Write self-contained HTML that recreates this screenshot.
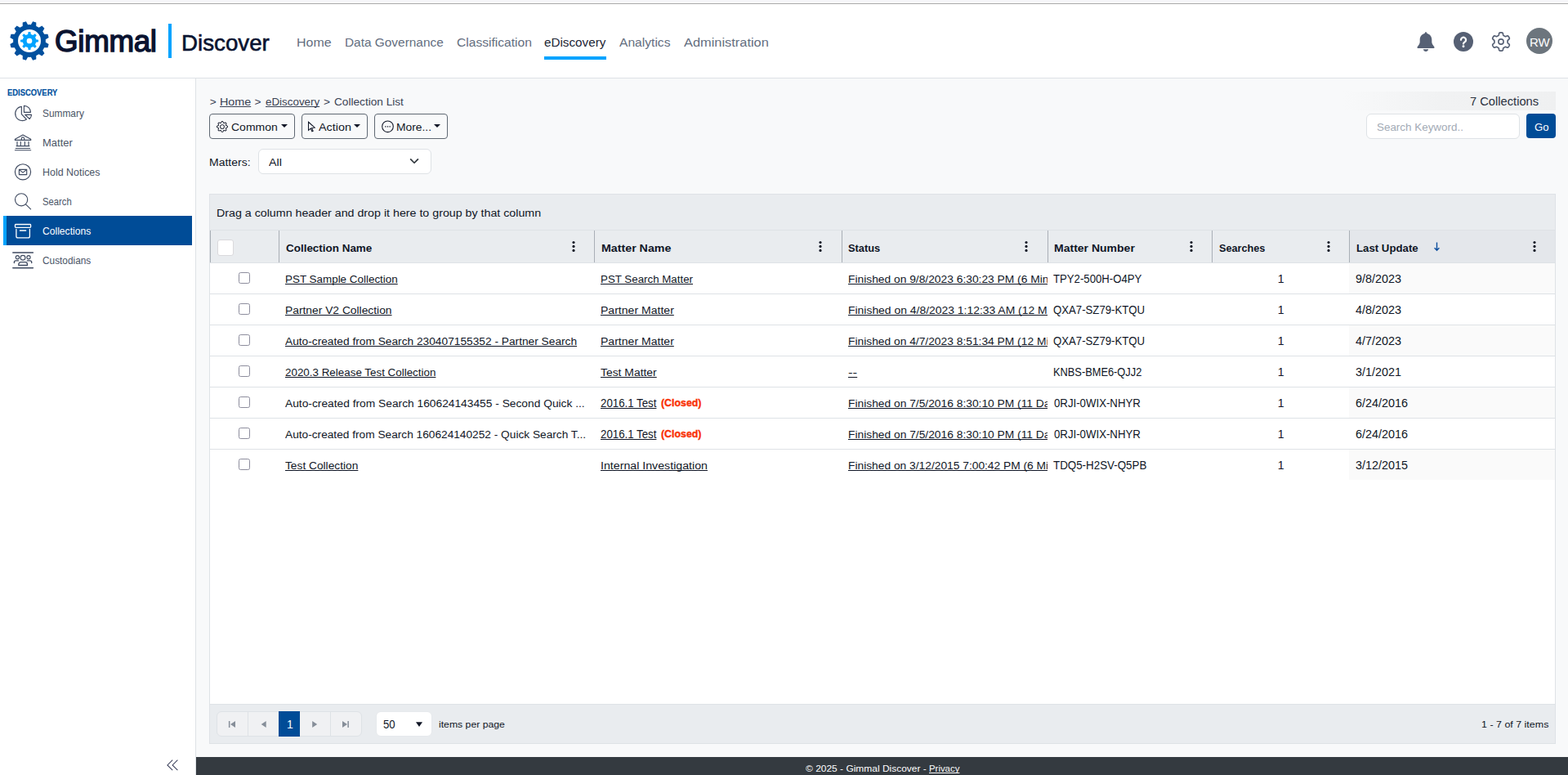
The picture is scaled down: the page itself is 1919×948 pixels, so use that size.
<!DOCTYPE html>
<html lang="en">
<head>
<meta charset="utf-8">
<title>Collection List - Gimmal Discover</title>
<style>
*{box-sizing:border-box}
html,body{margin:0;padding:0}
body{width:1919px;height:948px;overflow:hidden;position:relative;background:#f8f9fa;font-family:"Liberation Sans",Arial,sans-serif;font-size:14px;color:#101626}
header,aside,main,footer,nav,section{position:absolute;display:block}
div,span,a,svg,ul,li,button,label,h1,h2,p,input,i,b{position:absolute;margin:0;padding:0}
ul{list-style:none}
.t{white-space:pre;line-height:1;color:inherit;text-decoration:none}
a.t.u,.u{text-decoration:underline;text-decoration-thickness:1px;text-underline-offset:0.5px;text-decoration-skip-ink:none}
button{border:0;background:none;font:inherit;color:inherit}
#topbar{left:0;top:0;width:1919px;height:5px;background:linear-gradient(#f6f6f9 0,#f6f6f9 3px,#fafafc 3px,#fafafc 4px);border-bottom:1px solid #a9a9a9}
header{left:0;top:5px;width:1919px;height:91px;background:#fff;border-bottom:1px solid #dee2e6}
aside{left:0;top:96px;width:240px;height:852px;background:#fff;border-right:1px solid #dee2e6}
main{left:240px;top:96px;width:1679px;height:830px;background:#f8f9fa}
footer{left:240px;top:926px;width:1679px;height:22px;background:#343a40;color:#fff}
.nav{color:#646e80}
.nav .on{color:#1d2535}
.side{color:#4a5466}
.btn{border:1px solid #5f6873;border-radius:4px;background:transparent}
.caret{width:0;height:0;border-left:4.2px solid transparent;border-right:4.2px solid transparent;border-top:4.2px solid #101626}
.grid{background:#fff;border:1px solid #dee2e6}
.cb{border:1px solid #8d8d9d;border-radius:2.5px;background:#fff}
</style>
</head>
<body>
<div id="topbar"></div>
<header>
<a class="brandlink" aria-label="Gimmal Discover" style="left:0;top:0"><svg class="ic logo" style="left:12px;top:21px;" width="48" height="48" viewBox="0 0 48 48" aria-hidden="true"><path fill="#00509e" fill-rule="evenodd" d="M25.87 4.19L28.09 0.35L32.29 1.48L32.28 5.91A19.9 19.9 0 0 1 35.53 7.78L39.36 5.56L42.44 8.64L40.22 12.47A19.9 19.9 0 0 1 42.09 15.72L46.52 15.71L47.65 19.91L43.81 22.13A19.9 19.9 0 0 1 43.81 25.87L47.65 28.09L46.52 32.29L42.09 32.28A19.9 19.9 0 0 1 40.22 35.53L42.44 39.36L39.36 42.44L35.53 40.22A19.9 19.9 0 0 1 32.28 42.09L32.29 46.52L28.09 47.65L25.87 43.81A19.9 19.9 0 0 1 22.13 43.81L19.91 47.65L15.71 46.52L15.72 42.09A19.9 19.9 0 0 1 12.47 40.22L8.64 42.44L5.56 39.36L7.78 35.53A19.9 19.9 0 0 1 5.91 32.28L1.48 32.29L0.35 28.09L4.19 25.87A19.9 19.9 0 0 1 4.19 22.13L0.35 19.91L1.48 15.71L5.91 15.72A19.9 19.9 0 0 1 7.78 12.47L5.56 8.64L8.64 5.56L12.47 7.78A19.9 19.9 0 0 1 15.72 5.91L15.71 1.48L19.91 0.35L22.13 4.19A19.9 19.9 0 0 1 25.87 4.19ZM24 10a14 14 0 1 0 0 28a14 14 0 1 0 0-28Z"/><path fill="#00a3ff" fill-rule="evenodd" d="M22.13 15.91L22.65 12.98L25.35 12.98L25.87 15.91A8.3 8.3 0 0 1 28.40 16.96L30.83 15.25L32.75 17.17L31.04 19.60A8.3 8.3 0 0 1 32.09 22.13L35.02 22.65L35.02 25.35L32.09 25.87A8.3 8.3 0 0 1 31.04 28.40L32.75 30.83L30.83 32.75L28.40 31.04A8.3 8.3 0 0 1 25.87 32.09L25.35 35.02L22.65 35.02L22.13 32.09A8.3 8.3 0 0 1 19.60 31.04L17.17 32.75L15.25 30.83L16.96 28.40A8.3 8.3 0 0 1 15.91 25.87L12.98 25.35L12.98 22.65L15.91 22.13A8.3 8.3 0 0 1 16.96 19.60L15.25 17.17L17.17 15.25L19.60 16.96A8.3 8.3 0 0 1 22.13 15.91ZM24 20.65a3.35 3.35 0 1 0 0 6.7a3.35 3.35 0 1 0 0-6.7Z"/></svg><span class="t brand" style="left:66.60px;top:27.20px;font-size:37px;letter-spacing:-0.300px;transform:scaleX(0.9927);transform-origin:0 50%;-webkit-text-stroke:1.5px currentColor;color:#0a1330;">Gimmal</span><div style="left:206px;top:24px;width:4px;height:42px;background:#00a3ff;"></div><span class="t brand2" style="left:222.00px;top:33.00px;font-size:28.5px;transform:scaleX(0.9723);transform-origin:0 50%;-webkit-text-stroke:0.6px currentColor;color:#0a1330;">Discover</span></a>
<nav class="nav" aria-label="Main" style="left:0;top:0">
<a class="t" style="left:362.73px;top:39.00px;font-size:15.5px;transform:scaleX(1.0307);transform-origin:0 50%;">Home</a><a class="t" style="left:421.63px;top:39.00px;font-size:15.5px;transform:scaleX(0.9938);transform-origin:0 50%;">Data Governance</a><a class="t" style="left:558.66px;top:39.00px;font-size:15.5px;transform:scaleX(1.0065);transform-origin:0 50%;">Classification</a><a class="t on" style="left:666.27px;top:39.00px;font-size:15.5px;transform:scaleX(0.9834);transform-origin:0 50%;">eDiscovery</a><a class="t" style="left:758.38px;top:39.00px;font-size:15.5px;transform:scaleX(1.0071);transform-origin:0 50%;">Analytics</a><a class="t" style="left:837.11px;top:39.00px;font-size:15.5px;transform:scaleX(1.0575);transform-origin:0 50%;">Administration</a><div style="left:666px;top:64px;width:76px;height:4px;background:#00a3ff;"></div></nav>
<div class="tools" style="left:0;top:0"><svg class="ic" style="left:1733px;top:34px;" width="24" height="24" viewBox="0 0 24 24" aria-hidden="true"><path fill="#566074" d="M12 .2c.75 0 1.350.6 1.350 1.350v.45c3.4.65 5.950 3.600 5.950 7.200v3.100c0 1.250.4 2.450 1.150 3.450l1.850 2.400c.6.800.050 1.950-.95 1.950H2.650c-1 0-1.550-1.150-.95-1.950l1.850-2.400c.750-1 1.150-2.200 1.150-3.450V9.200c0-3.600 2.550-6.550 5.950-7.200v-.45c0-.750.6-1.350 1.350-1.350zM8.800 21.200h6.400c-.3 1.600-1.600 2.800-3.200 2.800s-2.900-1.200-3.200-2.800z"/></svg><svg class="ic" style="left:1779px;top:34px;" width="24" height="24" viewBox="0 0 24 24" aria-hidden="true"><circle cx="12" cy="12" r="12" fill="#566074"/><path d="M9 9.800A3.050 3.050 0 1 1 13.600 12.400C12.600 13.050 12 13.500 12 14.500" fill="none" stroke="#fff" stroke-width="2.250" stroke-linecap="round"/><circle cx="12" cy="17.700" r="1.450" fill="#fff"/></svg><svg class="ic" style="left:1825px;top:34px;" width="24" height="24" viewBox="0 0 24 24" aria-hidden="true"><path d="M12.00 0.80L12.39 0.81L12.78 0.84L13.17 0.90L13.55 1.00L13.90 1.20L14.21 1.59L14.43 2.26L14.55 3.10L14.68 3.77L14.85 4.17L15.07 4.40L15.31 4.57L15.56 4.71L15.80 4.85L16.05 4.99L16.29 5.13L16.54 5.27L16.78 5.42L17.05 5.54L17.36 5.61L17.79 5.57L18.43 5.34L19.22 5.03L19.91 4.88L20.40 4.95L20.75 5.16L21.03 5.44L21.27 5.74L21.50 6.07L21.70 6.40L21.89 6.74L22.05 7.10L22.20 7.46L22.30 7.84L22.30 8.25L22.12 8.71L21.65 9.23L20.99 9.76L20.47 10.20L20.21 10.55L20.12 10.86L20.09 11.15L20.09 11.43L20.10 11.72L20.10 12.00L20.10 12.28L20.09 12.57L20.09 12.85L20.12 13.14L20.21 13.45L20.47 13.80L20.99 14.24L21.65 14.77L22.12 15.29L22.30 15.75L22.30 16.16L22.20 16.54L22.05 16.90L21.89 17.26L21.70 17.60L21.50 17.93L21.27 18.26L21.03 18.56L20.75 18.84L20.40 19.05L19.91 19.12L19.22 18.97L18.43 18.66L17.79 18.43L17.36 18.39L17.05 18.46L16.78 18.58L16.54 18.73L16.29 18.87L16.05 19.01L15.80 19.15L15.56 19.29L15.31 19.43L15.07 19.60L14.85 19.83L14.68 20.23L14.55 20.90L14.43 21.74L14.21 22.41L13.90 22.80L13.55 23.00L13.17 23.10L12.78 23.16L12.39 23.19L12.00 23.20L11.61 23.19L11.22 23.16L10.83 23.10L10.45 23.00L10.10 22.80L9.79 22.41L9.57 21.74L9.45 20.90L9.32 20.23L9.15 19.83L8.93 19.60L8.69 19.43L8.44 19.29L8.20 19.15L7.95 19.01L7.71 18.87L7.46 18.73L7.22 18.58L6.95 18.46L6.64 18.39L6.21 18.43L5.57 18.66L4.78 18.97L4.09 19.12L3.60 19.05L3.25 18.84L2.97 18.56L2.73 18.26L2.50 17.93L2.30 17.60L2.11 17.26L1.95 16.90L1.80 16.54L1.70 16.16L1.70 15.75L1.88 15.29L2.35 14.77L3.01 14.24L3.53 13.80L3.79 13.45L3.88 13.14L3.91 12.85L3.91 12.57L3.90 12.28L3.90 12.00L3.90 11.72L3.91 11.43L3.91 11.15L3.88 10.86L3.79 10.55L3.53 10.20L3.01 9.76L2.35 9.23L1.88 8.71L1.70 8.25L1.70 7.84L1.80 7.46L1.95 7.10L2.11 6.74L2.30 6.40L2.50 6.07L2.73 5.74L2.97 5.44L3.25 5.16L3.60 4.95L4.09 4.88L4.78 5.03L5.57 5.34L6.21 5.57L6.64 5.61L6.95 5.54L7.22 5.42L7.46 5.27L7.71 5.13L7.95 4.99L8.20 4.85L8.44 4.71L8.69 4.57L8.93 4.40L9.15 4.17L9.32 3.77L9.45 3.10L9.57 2.26L9.79 1.59L10.10 1.20L10.45 1.00L10.83 0.90L11.22 0.84L11.61 0.81Z" fill="none" stroke="#566074" stroke-width="1.700" stroke-linejoin="round"/><circle cx="12" cy="12" r="3.100" fill="none" stroke="#566074" stroke-width="1.600"/></svg><div style="left:1868px;top:29px;width:32px;height:32px;border-radius:50%;background:#6c757d;"></div><span class="t" style="left:1871.52px;top:39.00px;font-size:15.5px;transform:scaleX(0.9679);transform-origin:0 50%;color:#fff;">RW</span></div>
</header>
<aside>
<h2 class="t" style="left:8.56px;top:12.00px;font-size:11.5px;transform:scaleX(0.8185);transform-origin:0 50%;-webkit-text-stroke:0.18px currentColor;color:#00509e;">EDISCOVERY</h2><ul class="side" style="left:0;top:0">
<li style="left:4px;top:24px;width:231px;height:36px;"><svg class="ic" style="left:8px;top:2px;" width="34" height="34" viewBox="12 122 34 34" aria-hidden="true"><g fill="none" stroke="#3f4a60" stroke-width="1.15" stroke-linejoin="round" stroke-linecap="round"><path d="M26.35 130.4V139.6L32.4 146A8.65 8.65 0 1 1 26.35 130.4Z"/><path d="M29.4 129.3A8.1 8.1 0 0 1 37.5 137.3H29.4Z"/><path d="M30.7 140.3H38.6A8.5 8.5 0 0 1 36.2 145.5Z"/></g></svg><a class="t" style="left:47.83px;top:12.00px;font-size:13px;transform:scaleX(0.9149);transform-origin:0 50%;">Summary</a></li>
<li style="left:4px;top:60px;width:231px;height:36px;"><svg class="ic" style="left:8px;top:2px;" width="34" height="34" viewBox="12 158 34 34" aria-hidden="true"><g fill="none" stroke="#3f4a60" stroke-width="1.15" stroke-linejoin="round" stroke-linecap="round"><path d="M28 165.1L18.4 170.3V171.4H37.7V170.3Z"/><path d="M26.3 171.2V169.6A1.7 1.7 0 0 1 29.7 169.6V171.2"/><path d="M21 173.3V178.3M25.3 173.3V178.3M30.4 173.3V178.3M35 173.3V178.3M20.1 178.6H35.9M19.2 181.5H36.7M18.4 183.7H37.7"/></g></svg><a class="t" style="left:47.72px;top:12.00px;font-size:13px;transform:scaleX(0.9979);transform-origin:0 50%;">Matter</a></li>
<li style="left:4px;top:96px;width:231px;height:36px;"><svg class="ic" style="left:8px;top:2px;" width="34" height="34" viewBox="12 194 34 34" aria-hidden="true"><g fill="none" stroke="#3f4a60" stroke-width="1.15" stroke-linejoin="round" stroke-linecap="round"><circle cx="28" cy="210.3" r="9.6"/><path d="M23.4 207.3H32.7V213.6H23.4Z"/><path d="M23.6 207.6L28 211.1L32.5 207.6"/></g></svg><a class="t" style="left:47.77px;top:12.00px;font-size:13px;transform:scaleX(0.9565);transform-origin:0 50%;">Hold Notices</a></li>
<li style="left:4px;top:132px;width:231px;height:36px;"><svg class="ic" style="left:8px;top:2px;" width="34" height="34" viewBox="12 230 34 34" aria-hidden="true"><g fill="none" stroke="#3f4a60" stroke-width="1.15" stroke-linejoin="round" stroke-linecap="round"><circle cx="26.1" cy="244.3" r="7.6"/><path d="M31.7 250.2L37.6 255.8"/></g></svg><a class="t" style="left:47.89px;top:12.00px;font-size:13px;transform:scaleX(0.8676);transform-origin:0 50%;">Search</a></li>
<li class="on" style="left:4px;top:168px;width:231px;height:36px;background:#004c97;border-left:4px solid #00a3ff;color:#fff;" aria-current="page"><svg class="ic" style="left:4px;top:2px;" width="34" height="34" viewBox="12 266 34 34" aria-hidden="true"><g fill="none" stroke="#fff" stroke-width="1.3" stroke-linejoin="round" stroke-linecap="round"><rect x="18.5" y="274.5" width="19.1" height="3.9" rx="0.8"/><path d="M19.9 280.3V288.9A2 2 0 0 0 21.9 290.9H34.4A2 2 0 0 0 36.4 288.9V280.3"/><path d="M24.5 282H31.6" stroke-width="1.5"/></g></svg><a class="t" style="left:44.26px;top:12.00px;font-size:13px;transform:scaleX(0.9315);transform-origin:0 50%;">Collections</a></li>
<li style="left:4px;top:204px;width:231px;height:36px;"><svg class="ic" style="left:8px;top:2px;" width="34" height="34" viewBox="12 302 34 34" aria-hidden="true"><g fill="none" stroke="#3f4a60" stroke-width="1.15" stroke-linejoin="round" stroke-linecap="round"><path d="M15.8 309H40.4M15.8 327.8H40.4" stroke-width="1.5"/><circle cx="21.4" cy="314.7" r="2.1"/><circle cx="28" cy="315.3" r="2.9"/><circle cx="35" cy="314.7" r="2.1"/><path d="M17.4 321.6V320.9A2 2 0 0 1 19.4 318.9H22.6M33.4 318.9H36.7A2 2 0 0 1 38.7 320.9V321.6" stroke-width="1.4"/><path d="M25.6 320.6H30.7A2.8 2.8 0 0 1 33.5 323.4V324.5H22.8V323.4A2.8 2.8 0 0 1 25.6 320.6Z" stroke-width="1.3"/></g></svg><a class="t" style="left:48.27px;top:12.00px;font-size:13px;transform:scaleX(0.9116);transform-origin:0 50%;">Custodians</a></li>
</ul>
<svg class="ic" style="left:200px;top:830px;" width="22" height="20" viewBox="200 926 22 20" aria-hidden="true"><path fill="none" stroke="#3a3f5a" stroke-width="1.05" d="M211.2 929.7L204.9 935.9L211.2 942.1M217.4 929.7L211.1 935.9L217.4 942.1"/></svg></aside>
<main>
<nav class="bc" aria-label="breadcrumb" style="color:#3a4254"><span class="t" style="left:16.78px;top:22.20px;font-size:13.7px;">&gt;</span><a class="t u" style="left:28.82px;top:22.20px;font-size:13.7px;transform:scaleX(1.0464);transform-origin:0 50%;">Home</a><span class="t" style="left:71.48px;top:22.20px;font-size:13.7px;">&gt;</span><a class="t u" style="left:84.69px;top:22.20px;font-size:13.7px;transform:scaleX(0.9771);transform-origin:0 50%;">eDiscovery</a><span class="t" style="left:155.88px;top:22.20px;font-size:13.7px;">&gt;</span><span class="t" style="left:168.99px;top:22.20px;font-size:13.7px;transform:scaleX(0.9961);transform-origin:0 50%;">Collection List</span></nav>
<div style="left:1404px;top:16px;width:260px;height:23px;background:linear-gradient(90deg,rgba(239,240,241,0) 0%,#f1f2f3 45%,#eff0f1 100%);"></div><span class="t" style="left:1559.47px;top:20.20px;font-size:15.5px;transform:scaleX(0.9474);transform-origin:0 50%;color:#2b3140;">7 Collections</span><div class="toolbar" role="toolbar" style="left:0;top:0"><button class="btn" style="left:16px;top:43px;width:105px;height:31px;" type="button" aria-haspopup="true"><svg class="ic" style="left:8px;top:8px;" width="14" height="14" viewBox="0 0 16 16" aria-hidden="true"><g fill="#101626"><path d="M8 4.754a3.246 3.246 0 1 0 0 6.492 3.246 3.246 0 0 0 0-6.492zM5.754 8a2.246 2.246 0 1 1 4.492 0 2.246 2.246 0 0 1-4.492 0z"/><path d="M9.796 1.343c-.527-1.790-3.065-1.790-3.592 0l-.094.319a.873.873 0 0 1-1.255.520l-.292-.160c-1.640-.892-3.433.902-2.540 2.541l.159.292a.873.873 0 0 1-.520 1.255l-.319.094c-1.790.527-1.790 3.065 0 3.592l.319.094a.873.873 0 0 1 .520 1.255l-.160.292c-.892 1.640.901 3.434 2.541 2.540l.292-.159a.873.873 0 0 1 1.255.520l.094.319c.527 1.790 3.065 1.790 3.592 0l.094-.319a.873.873 0 0 1 1.255-.520l.292.160c1.640.893 3.434-.902 2.540-2.541l-.159-.292a.873.873 0 0 1 .520-1.255l.319-.094c1.790-.527 1.790-3.065 0-3.592l-.319-.094a.873.873 0 0 1-.520-1.255l.160-.292c.893-1.640-.902-3.433-2.541-2.540l-.292.159a.873.873 0 0 1-1.255-.520l-.094-.319zm-2.633.283c.246-.835 1.428-.835 1.674 0l.094.319a1.873 1.873 0 0 0 2.693 1.115l.291-.160c.764-.415 1.600.420 1.184 1.185l-.159.292a1.873 1.873 0 0 0 1.116 2.692l.318.094c.835.246.835 1.428 0 1.674l-.319.094a1.873 1.873 0 0 0-1.115 2.693l.160.291c.415.764-.420 1.600-1.185 1.184l-.291-.159a1.873 1.873 0 0 0-2.693 1.116l-.094.318c-.246.835-1.428.835-1.674 0l-.094-.319a1.873 1.873 0 0 0-2.692-1.115l-.292.160c-.764.415-1.600-.420-1.184-1.185l.159-.291A1.873 1.873 0 0 0 1.945 8.930l-.319-.094c-.835-.246-.835-1.428 0-1.674l.319-.094A1.873 1.873 0 0 0 3.060 4.377l-.160-.292c-.415-.764.420-1.600 1.185-1.184l.292.159a1.873 1.873 0 0 0 2.692-1.115l.094-.319z"/></g></svg><span class="t" style="left:26.17px;top:8.60px;font-size:13.7px;transform:scaleX(1.0219);transform-origin:0 50%;">Common</span><i class="caret" style="left:87px;top:12.2px;width:8.4px;height:4.2px;"></i></button><button class="btn" style="left:129px;top:43px;width:81px;height:31px;" type="button" aria-haspopup="true"><svg class="ic" style="left:5px;top:7px;" width="13" height="16" viewBox="375 147 13 16" aria-hidden="true"><path fill="none" stroke="#101626" stroke-width="1.05" stroke-linejoin="miter" d="M377.5 149.3V159.4L380.2 157.1L381.9 160.8L383.2 160.2L381.6 156.6L385.2 156.2Z"/></svg><span class="t" style="left:19.86px;top:8.60px;font-size:13.7px;transform:scaleX(1.0483);transform-origin:0 50%;">Action</span><i class="caret" style="left:63px;top:12.2px;width:8.4px;height:4.2px;"></i></button><button class="btn" style="left:218px;top:43px;width:90px;height:31px;" type="button" aria-haspopup="true"><svg class="ic" style="left:7px;top:7px;" width="17" height="16" viewBox="466 147 17 16" aria-hidden="true"><circle cx="474.5" cy="154.8" r="6.8" fill="none" stroke="#101626" stroke-width="1.05"/><path d="M471.2 154.2h1.3v1.2h-1.3zM473.85 154.2h1.3v1.2h-1.3zM476.5 154.2h1.3v1.2h-1.3z" fill="#101626"/></svg><span class="t" style="left:26.27px;top:8.60px;font-size:13.7px;transform:scaleX(1.0106);transform-origin:0 50%;">More...</span><i class="caret" style="left:72px;top:12.2px;width:8.4px;height:4.2px;"></i></button></div>
<label class="t" style="left:16.45px;top:96.00px;font-size:13.7px;transform:scaleX(1.0218);transform-origin:0 50%;">Matters:</label><div class="select" style="left:76px;top:86px;width:212px;height:31px;border:1px solid #dee2e6;border-radius:6px;background:#fff;" role="combobox" aria-label="Matters" aria-expanded="false"><span class="t" style="left:12.47px;top:9.00px;font-size:13.7px;transform:scaleX(1.0404);transform-origin:0 50%;">All</span><svg class="ic" style="left:183px;top:9px;" width="15" height="10" viewBox="500 192 15 10" aria-hidden="true"><path d="M502.7 194.9L507.05 199.25L511.4 194.9" fill="none" stroke="#343a40" stroke-width="1.75" stroke-linecap="round" stroke-linejoin="round"/></svg></div>
<div class="search" role="search" style="left:0;top:0"><div class="input" style="left:1432px;top:43px;width:188px;height:31px;border:1px solid #dee2e6;border-radius:6px;background:#fff;" role="searchbox" aria-label="Search Keyword"><span class="t" style="left:12.05px;top:8.80px;font-size:13.7px;transform:scaleX(0.9799);transform-origin:0 50%;color:#a3abb6;">Search Keyword..</span></div><button style="left:1628px;top:43px;width:36px;height:30px;background:#004c97;border-radius:4px;" type="button"><span class="t" style="left:9.61px;top:9.80px;font-size:13.7px;transform:scaleX(0.9618);transform-origin:0 50%;color:#fff;">Go</span></button></div>
<section class="grid" style="left:16px;top:141px;width:1648px;height:673px;" role="grid" aria-label="Collections">
<div class="grouping" style="left:0px;top:0px;width:1646px;height:44px;background:#e9ecef;border-bottom:1px solid #dee2e6;"><span class="t" style="left:7.73px;top:16.00px;font-size:13.7px;transform:scaleX(1.0397);transform-origin:0 50%;">Drag a column header and drop it here to group by that column</span></div>
<div class="hrow" style="left:0px;top:44px;width:1646px;height:40px;background:#e9ecef;border-bottom:1px solid #dee2e6;" role="row"><div class="th" style="left:0px;top:0px;width:84px;height:39px;border-left:1px solid #a9afb6;" role="columnheader"><i class="hcb" style="left:8px;top:11px;width:20px;height:20px;border:1px solid #dad9dc;border-radius:3px;background:#fff;" role="checkbox" aria-checked="false"></i></div><div class="th" style="left:84px;top:0px;width:386px;height:39px;border-left:1px solid #a9afb6;" role="columnheader"><span class="t" style="left:8.10px;top:15.00px;font-size:13.7px;font-weight:700;transform:scaleX(0.9818);transform-origin:0 50%;">Collection Name</span><svg class="ic" style="left:356.5px;top:12px;fill:#101626;" width="6" height="16" viewBox="0 0 6 16" aria-hidden="true"><circle cx="3" cy="2.5" r="1.6"/><circle cx="3" cy="7.45" r="1.6"/><circle cx="3" cy="12.4" r="1.6"/></svg></div><div class="th" style="left:470px;top:0px;width:303px;height:39px;border-left:1px solid #a9afb6;" role="columnheader"><span class="t" style="left:7.57px;top:15.00px;font-size:13.7px;font-weight:700;transform:scaleX(1.0388);transform-origin:0 50%;">Matter Name</span><svg class="ic" style="left:272.5px;top:12px;fill:#101626;" width="6" height="16" viewBox="0 0 6 16" aria-hidden="true"><circle cx="3" cy="2.5" r="1.6"/><circle cx="3" cy="7.45" r="1.6"/><circle cx="3" cy="12.4" r="1.6"/></svg></div><div class="th" style="left:773px;top:0px;width:252px;height:39px;border-left:1px solid #a9afb6;" role="columnheader"><span class="t" style="left:7.29px;top:15.00px;font-size:13.7px;font-weight:700;transform:scaleX(0.9368);transform-origin:0 50%;">Status</span><svg class="ic" style="left:221.5px;top:12px;fill:#101626;" width="6" height="16" viewBox="0 0 6 16" aria-hidden="true"><circle cx="3" cy="2.5" r="1.6"/><circle cx="3" cy="7.45" r="1.6"/><circle cx="3" cy="12.4" r="1.6"/></svg></div><div class="th" style="left:1025px;top:0px;width:201px;height:39px;border-left:1px solid #a9afb6;" role="columnheader"><span class="t" style="left:7.28px;top:15.00px;font-size:13.7px;font-weight:700;transform:scaleX(1.0235);transform-origin:0 50%;">Matter Number</span><svg class="ic" style="left:171.5px;top:12px;fill:#101626;" width="6" height="16" viewBox="0 0 6 16" aria-hidden="true"><circle cx="3" cy="2.5" r="1.6"/><circle cx="3" cy="7.45" r="1.6"/><circle cx="3" cy="12.4" r="1.6"/></svg></div><div class="th" style="left:1226px;top:0px;width:168px;height:39px;border-left:1px solid #a9afb6;" role="columnheader"><span class="t" style="left:7.90px;top:15.00px;font-size:13.7px;font-weight:700;transform:scaleX(0.9267);transform-origin:0 50%;">Searches</span><svg class="ic" style="left:138.5px;top:12px;fill:#101626;" width="6" height="16" viewBox="0 0 6 16" aria-hidden="true"><circle cx="3" cy="2.5" r="1.6"/><circle cx="3" cy="7.45" r="1.6"/><circle cx="3" cy="12.4" r="1.6"/></svg></div><div class="th" style="left:1394px;top:0px;width:252px;height:39px;border-left:1px solid #a9afb6;background:#e4e7eb;" role="columnheader" aria-sort="descending"><span class="t" style="left:7.95px;top:15.00px;font-size:13.7px;font-weight:700;transform:scaleX(0.9655);transform-origin:0 50%;">Last Update</span><svg class="ic" style="left:101px;top:12px;" width="12" height="15" viewBox="1753 294 12 15" aria-hidden="true"><path d="M1758.5 296.6V306.2M1755.6 303.3L1758.5 306.3L1761.4 303.3" fill="none" stroke="#0d4f9e" stroke-width="1.4"/></svg><svg class="ic" style="left:222.5px;top:12px;fill:#101626;" width="6" height="16" viewBox="0 0 6 16" aria-hidden="true"><circle cx="3" cy="2.5" r="1.6"/><circle cx="3" cy="7.45" r="1.6"/><circle cx="3" cy="12.4" r="1.6"/></svg></div></div>
<div class="tbody" role="rowgroup" style="left:0;top:0">
<div class="row" style="left:0px;top:84px;width:1646px;height:38px;border-bottom:1px solid #dee2e6;" role="row"><div class="td" style="left:0px;top:0px;width:84px;height:37px;" role="gridcell"><i class="cb" style="left:35px;top:11px;width:14px;height:14px;" role="checkbox" aria-checked="false"></i></div><div class="td" style="left:84px;top:0px;width:386px;height:37px;" role="gridcell"><a class="t u" style="left:7.70px;top:13.00px;font-size:13.7px;transform:scaleX(0.9804);transform-origin:0 50%;">PST Sample Collection</a></div><div class="td" style="left:470px;top:0px;width:303px;height:37px;" role="gridcell"><a class="t u" style="left:7.71px;top:13.00px;font-size:13.7px;transform:scaleX(0.9731);transform-origin:0 50%;">PST Search Matter</a></div><div class="td" style="left:774px;top:0px;width:251px;height:37px;overflow:hidden;" role="gridcell"><a class="t u" style="left:6.57px;top:13.00px;font-size:13.7px;transform:scaleX(1.0081);transform-origin:0 50%;">Finished on 9/8/2023 6:30:23 PM (6 Minutes)</a></div><div class="td" style="left:1025px;top:0px;width:201px;height:37px;" role="gridcell"><span class="t" style="left:7.26px;top:12.00px;font-size:14px;transform:scaleX(0.9407);transform-origin:0 50%;">TPY2-500H-O4PY</span></div><div class="td" style="left:1226px;top:0px;width:168px;height:37px;" role="gridcell"><span class="t" style="left:80.82px;top:12.00px;font-size:14px;">1</span></div><div class="td" style="left:1394px;top:0px;width:252px;height:37px;background:#fafafa;" role="gridcell"><span class="t" style="left:8.15px;top:12.00px;font-size:14px;transform:scaleX(1.0262);transform-origin:0 50%;">9/8/2023</span></div></div>
<div class="row" style="left:0px;top:122px;width:1646px;height:38px;border-bottom:1px solid #dee2e6;" role="row"><div class="td" style="left:0px;top:0px;width:84px;height:37px;" role="gridcell"><i class="cb" style="left:35px;top:11px;width:14px;height:14px;" role="checkbox" aria-checked="false"></i></div><div class="td" style="left:84px;top:0px;width:386px;height:37px;" role="gridcell"><a class="t u" style="left:7.67px;top:13.00px;font-size:13.7px;transform:scaleX(1.0093);transform-origin:0 50%;">Partner V2 Collection</a></div><div class="td" style="left:470px;top:0px;width:303px;height:37px;" role="gridcell"><a class="t u" style="left:7.65px;top:13.00px;font-size:13.7px;transform:scaleX(1.0267);transform-origin:0 50%;">Partner Matter</a></div><div class="td" style="left:774px;top:0px;width:251px;height:37px;overflow:hidden;" role="gridcell"><a class="t u" style="left:6.56px;top:13.00px;font-size:13.7px;transform:scaleX(1.0167);transform-origin:0 50%;">Finished on 4/8/2023 1:12:33 AM (12 Minutes)</a></div><div class="td" style="left:1025px;top:0px;width:201px;height:37px;" role="gridcell"><span class="t" style="left:7.45px;top:12.00px;font-size:14px;transform:scaleX(0.9414);transform-origin:0 50%;">QXA7-SZ79-KTQU</span></div><div class="td" style="left:1226px;top:0px;width:168px;height:37px;" role="gridcell"><span class="t" style="left:80.82px;top:12.00px;font-size:14px;">1</span></div><div class="td" style="left:1394px;top:0px;width:252px;height:37px;" role="gridcell"><span class="t" style="left:8.00px;top:12.00px;font-size:14px;transform:scaleX(1.0288);transform-origin:0 50%;">4/8/2023</span></div></div>
<div class="row" style="left:0px;top:160px;width:1646px;height:38px;border-bottom:1px solid #dee2e6;" role="row"><div class="td" style="left:0px;top:0px;width:84px;height:37px;" role="gridcell"><i class="cb" style="left:35px;top:11px;width:14px;height:14px;" role="checkbox" aria-checked="false"></i></div><div class="td" style="left:84px;top:0px;width:386px;height:37px;" role="gridcell"><a class="t u" style="left:8.08px;top:13.00px;font-size:13.7px;transform:scaleX(1.0028);transform-origin:0 50%;">Auto-created from Search 230407155352 - Partner Search</a></div><div class="td" style="left:470px;top:0px;width:303px;height:37px;" role="gridcell"><a class="t u" style="left:7.65px;top:13.00px;font-size:13.7px;transform:scaleX(1.0267);transform-origin:0 50%;">Partner Matter</a></div><div class="td" style="left:774px;top:0px;width:251px;height:37px;overflow:hidden;" role="gridcell"><a class="t u" style="left:6.57px;top:13.00px;font-size:13.7px;transform:scaleX(1.0081);transform-origin:0 50%;">Finished on 4/7/2023 8:51:34 PM (12 Minutes)</a></div><div class="td" style="left:1025px;top:0px;width:201px;height:37px;" role="gridcell"><span class="t" style="left:7.45px;top:12.00px;font-size:14px;transform:scaleX(0.9414);transform-origin:0 50%;">QXA7-SZ79-KTQU</span></div><div class="td" style="left:1226px;top:0px;width:168px;height:37px;" role="gridcell"><span class="t" style="left:80.82px;top:12.00px;font-size:14px;">1</span></div><div class="td" style="left:1394px;top:0px;width:252px;height:37px;background:#fafafa;" role="gridcell"><span class="t" style="left:8.00px;top:12.00px;font-size:14px;transform:scaleX(1.0288);transform-origin:0 50%;">4/7/2023</span></div></div>
<div class="row" style="left:0px;top:198px;width:1646px;height:38px;border-bottom:1px solid #dee2e6;" role="row"><div class="td" style="left:0px;top:0px;width:84px;height:37px;" role="gridcell"><i class="cb" style="left:35px;top:11px;width:14px;height:14px;" role="checkbox" aria-checked="false"></i></div><div class="td" style="left:84px;top:0px;width:386px;height:37px;" role="gridcell"><a class="t u" style="left:8.20px;top:13.00px;font-size:13.7px;transform:scaleX(0.9785);transform-origin:0 50%;">2020.3 Release Test Collection</a></div><div class="td" style="left:470px;top:0px;width:303px;height:37px;" role="gridcell"><a class="t u" style="left:8.04px;top:13.00px;font-size:13.7px;transform:scaleX(1.0152);transform-origin:0 50%;">Test Matter</a></div><div class="td" style="left:774px;top:0px;width:251px;height:37px;overflow:hidden;" role="gridcell"><a class="t u" style="left:6.99px;top:13.00px;font-size:13.7px;transform:scaleX(1.2265);transform-origin:0 50%;">--</a></div><div class="td" style="left:1025px;top:0px;width:201px;height:37px;" role="gridcell"><span class="t" style="left:6.96px;top:12.00px;font-size:14px;transform:scaleX(0.9158);transform-origin:0 50%;">KNBS-BME6-QJJ2</span></div><div class="td" style="left:1226px;top:0px;width:168px;height:37px;" role="gridcell"><span class="t" style="left:80.82px;top:12.00px;font-size:14px;">1</span></div><div class="td" style="left:1394px;top:0px;width:252px;height:37px;" role="gridcell"><span class="t" style="left:8.16px;top:12.00px;font-size:14px;transform:scaleX(1.0256);transform-origin:0 50%;">3/1/2021</span></div></div>
<div class="row" style="left:0px;top:236px;width:1646px;height:38px;border-bottom:1px solid #dee2e6;" role="row"><div class="td" style="left:0px;top:0px;width:84px;height:37px;" role="gridcell"><i class="cb" style="left:35px;top:11px;width:14px;height:14px;" role="checkbox" aria-checked="false"></i></div><div class="td" style="left:84px;top:0px;width:386px;height:37px;" role="gridcell"><span class="t" style="left:8.08px;top:13.00px;font-size:13.7px;transform:scaleX(1.0061);transform-origin:0 50%;">Auto-created from Search 160624143455 - Second Quick ...</span></div><div class="td" style="left:470px;top:0px;width:303px;height:37px;" role="gridcell"><a class="t u" style="left:8.22px;top:12.00px;font-size:14px;transform:scaleX(0.9483);transform-origin:0 50%;">2016.1 Test</a><b class="t" style="left:81.82px;top:12.00px;font-size:13.7px;font-weight:700;transform:scaleX(0.9040);transform-origin:0 50%;-webkit-text-stroke:0.4px currentColor;color:#f93207;">(Closed)</b></div><div class="td" style="left:774px;top:0px;width:251px;height:37px;overflow:hidden;" role="gridcell"><a class="t u" style="left:6.57px;top:13.00px;font-size:13.7px;transform:scaleX(1.0081);transform-origin:0 50%;">Finished on 7/5/2016 8:30:10 PM (11 Days)</a></div><div class="td" style="left:1025px;top:0px;width:201px;height:37px;" role="gridcell"><span class="t" style="left:7.53px;top:12.00px;font-size:14px;transform:scaleX(0.9451);transform-origin:0 50%;">0RJI-0WIX-NHYR</span></div><div class="td" style="left:1226px;top:0px;width:168px;height:37px;" role="gridcell"><span class="t" style="left:80.82px;top:12.00px;font-size:14px;">1</span></div><div class="td" style="left:1394px;top:0px;width:252px;height:37px;background:#fafafa;" role="gridcell"><span class="t" style="left:8.13px;top:12.00px;font-size:14px;transform:scaleX(1.0272);transform-origin:0 50%;">6/24/2016</span></div></div>
<div class="row" style="left:0px;top:274px;width:1646px;height:38px;border-bottom:1px solid #dee2e6;" role="row"><div class="td" style="left:0px;top:0px;width:84px;height:37px;" role="gridcell"><i class="cb" style="left:35px;top:11px;width:14px;height:14px;" role="checkbox" aria-checked="false"></i></div><div class="td" style="left:84px;top:0px;width:386px;height:37px;" role="gridcell"><span class="t" style="left:8.08px;top:13.00px;font-size:13.7px;transform:scaleX(1.0003);transform-origin:0 50%;">Auto-created from Search 160624140252 - Quick Search T...</span></div><div class="td" style="left:470px;top:0px;width:303px;height:37px;" role="gridcell"><a class="t u" style="left:8.22px;top:12.00px;font-size:14px;transform:scaleX(0.9483);transform-origin:0 50%;">2016.1 Test</a><b class="t" style="left:81.82px;top:12.00px;font-size:13.7px;font-weight:700;transform:scaleX(0.9040);transform-origin:0 50%;-webkit-text-stroke:0.4px currentColor;color:#f93207;">(Closed)</b></div><div class="td" style="left:774px;top:0px;width:251px;height:37px;overflow:hidden;" role="gridcell"><a class="t u" style="left:6.57px;top:13.00px;font-size:13.7px;transform:scaleX(1.0081);transform-origin:0 50%;">Finished on 7/5/2016 8:30:10 PM (11 Days)</a></div><div class="td" style="left:1025px;top:0px;width:201px;height:37px;" role="gridcell"><span class="t" style="left:7.53px;top:12.00px;font-size:14px;transform:scaleX(0.9451);transform-origin:0 50%;">0RJI-0WIX-NHYR</span></div><div class="td" style="left:1226px;top:0px;width:168px;height:37px;" role="gridcell"><span class="t" style="left:80.82px;top:12.00px;font-size:14px;">1</span></div><div class="td" style="left:1394px;top:0px;width:252px;height:37px;" role="gridcell"><span class="t" style="left:8.13px;top:12.00px;font-size:14px;transform:scaleX(1.0272);transform-origin:0 50%;">6/24/2016</span></div></div>
<div class="row" style="left:0px;top:312px;width:1646px;height:38px;" role="row"><div class="td" style="left:0px;top:0px;width:84px;height:37px;" role="gridcell"><i class="cb" style="left:35px;top:11px;width:14px;height:14px;" role="checkbox" aria-checked="false"></i></div><div class="td" style="left:84px;top:0px;width:386px;height:37px;" role="gridcell"><a class="t u" style="left:8.04px;top:13.00px;font-size:13.7px;transform:scaleX(1.0037);transform-origin:0 50%;">Test Collection</a></div><div class="td" style="left:470px;top:0px;width:303px;height:37px;" role="gridcell"><a class="t u" style="left:7.52px;top:13.00px;font-size:13.7px;transform:scaleX(1.0370);transform-origin:0 50%;">Internal Investigation</a></div><div class="td" style="left:774px;top:0px;width:251px;height:37px;overflow:hidden;" role="gridcell"><a class="t u" style="left:6.57px;top:13.00px;font-size:13.7px;transform:scaleX(1.0069);transform-origin:0 50%;">Finished on 3/12/2015 7:00:42 PM (6 Minutes)</a></div><div class="td" style="left:1025px;top:0px;width:201px;height:37px;" role="gridcell"><span class="t" style="left:7.26px;top:12.00px;font-size:14px;transform:scaleX(0.9541);transform-origin:0 50%;">TDQ5-H2SV-Q5PB</span></div><div class="td" style="left:1226px;top:0px;width:168px;height:37px;" role="gridcell"><span class="t" style="left:80.82px;top:12.00px;font-size:14px;">1</span></div><div class="td" style="left:1394px;top:0px;width:252px;height:37px;background:#fafafa;" role="gridcell"><span class="t" style="left:8.16px;top:12.00px;font-size:14px;transform:scaleX(1.0264);transform-origin:0 50%;">3/12/2015</span></div></div>
</div>
<div class="pager" style="left:0px;top:623px;width:1646px;height:48px;background:#e9ecef;border-top:1px solid #dee2e6;" role="navigation" aria-label="Pager"><div class="pgroup" style="left:8px;top:8px;width:178px;height:31px;border:1px solid #dee2e6;border-radius:6px;background:#f0f1f3;"><button style="left:0px;top:0px;width:37px;height:29px;" type="button" aria-label="Go to the first page"><svg class="ic" style="left:12px;top:9px;" width="12" height="12" viewBox="278 880 12 12" aria-hidden="true"><path fill="#868e99" d="M279.9 882.1h1.5v7.9h-1.5zM288 882.1v7.9l-6-3.95z"/></svg></button><div style="left:37px;top:0px;width:1px;height:29px;background:#dee2e6;"></div><button style="left:38px;top:0px;width:37px;height:29px;" type="button" aria-label="Go to the previous page"><svg class="ic" style="left:13px;top:9px;" width="12" height="12" viewBox="317 880 12 12" aria-hidden="true"><path fill="#868e99" d="M325.7 882.1v7.9l-6-3.95z"/></svg></button><button class="cur" style="left:75px;top:-1px;width:26px;height:31px;background:#004c97;color:#fff;" type="button" aria-current="page"><span class="t" style="left:9.92px;top:9.00px;font-size:14px;">1</span></button><button style="left:101px;top:0px;width:37px;height:29px;" type="button" aria-label="Go to the next page"><svg class="ic" style="left:12px;top:9px;" width="12" height="12" viewBox="379 880 12 12" aria-hidden="true"><path fill="#868e99" d="M382.2 882.1v7.9l6-3.95z"/></svg></button><div style="left:138px;top:0px;width:1px;height:29px;background:#dee2e6;"></div><button style="left:139px;top:0px;width:37px;height:29px;" type="button" aria-label="Go to the last page"><svg class="ic" style="left:12px;top:9px;" width="12" height="12" viewBox="417 880 12 12" aria-hidden="true"><path fill="#868e99" d="M419 882.1v7.9l6-3.95zM425.4 882.1h1.5v7.9h-1.5z"/></svg></button></div><div class="psize" style="left:203px;top:8px;width:69px;height:31px;background:#fff;border:1px solid #e6e9ec;border-radius:6px;" role="combobox" aria-label="Page size" aria-expanded="false"><span class="t" style="left:8.14px;top:8.00px;font-size:14px;transform:scaleX(0.9394);transform-origin:0 50%;">50</span><svg class="ic" style="left:47px;top:11px;" width="10" height="8" viewBox="508 882 10 8" aria-hidden="true"><path fill="#101626" d="M509 883.2h8l-4 5.8z"/></svg></div><span class="t" style="left:279.50px;top:19.30px;font-size:11.8px;transform:scaleX(1.0363);transform-origin:0 50%;">items per page</span><span class="t" style="left:1555.82px;top:19.30px;font-size:11.8px;transform:scaleX(1.0556);transform-origin:0 50%;">1 - 7 of 7 items</span></div>
</section>
</main>
<footer><span class="t" style="left:746.06px;top:8.60px;font-size:11.8px;transform:scaleX(1.0144);transform-origin:0 50%;">© 2025 - Gimmal Discover -</span><a class="t u" style="left:896.92px;top:8.60px;font-size:11.8px;transform:scaleX(0.9659);transform-origin:0 50%;">Privacy</a></footer>
</body>
</html>
